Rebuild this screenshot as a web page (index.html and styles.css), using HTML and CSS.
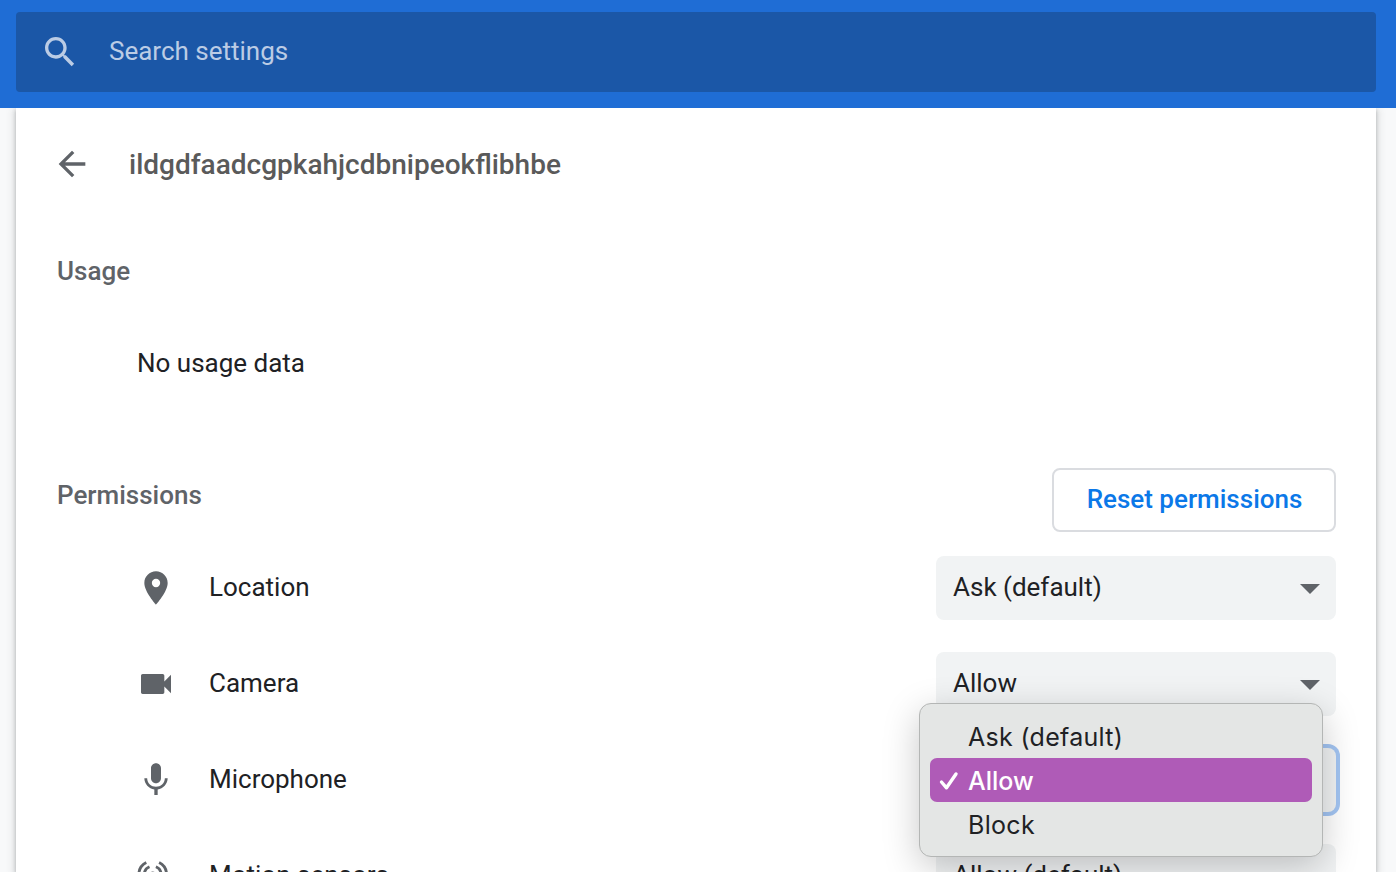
FILE: index.html
```html
<!DOCTYPE html>
<html lang="en">
<head>
    <meta charset="UTF-8">
    <meta name="viewport" content="width=device-width, initial-scale=1.0">
    <title>Settings</title>
    <link rel="stylesheet" href="styles.css">
</head>
<body>
    <!-- Toolbar -->
    <div id="toolbar">
        <div id="search">
            <svg class="icon" viewBox="0 0 24 24"><path d="M15.5 14h-.79l-.28-.27C15.41 12.59 16 11.11 16 9.5 16 5.91 13.09 3 9.5 3S3 5.91 3 9.5 5.91 16 9.5 16c1.61 0 3.09-.59 4.23-1.57l.27.28v.79l5 4.99L20.49 19l-4.99-5zm-6 0C7.01 14 5 11.99 5 9.5S7.01 5 9.5 5 14 7.01 14 9.5 11.99 14 9.5 14z"/></svg>
            <span>Search settings</span>
        </div>
    </div>

    <div id="page">
        <div id="title">
            <svg class="icon" viewBox="0 0 24 24"><path d="M20 11H7.83l5.59-5.59L12 4l-8 8 8 8 1.41-1.41L7.83 13H20v-2z"/></svg>
            <h1>ildgdfaadcgpkahjcdbnipeokflibhbe</h1>
        </div>

        <h2 class="usage-heading">Usage</h2>
        <div class="usage">No usage data</div>

        <div class="permissions-header">
            <h2>Permissions</h2>
            <button id="reset">Reset permissions</button>
        </div>

        <!-- Permission list -->
        <div class="row">
            <svg class="icon" viewBox="0 0 24 24"><path d="M12 2C8.13 2 5 5.13 5 9c0 5.25 7 13 7 13s7-7.75 7-13c0-3.87-3.13-7-7-7zm0 9.5a2.5 2.5 0 0 1 0-5 2.5 2.5 0 0 1 0 5z"/></svg>
            <span class="label">Location</span>
            <div class="select">Ask (default)</div>
        </div>
        <div class="row">
            <svg class="icon" viewBox="0 0 24 24"><path d="M17 10.5V7c0-.55-.45-1-1-1H4c-.55 0-1 .45-1 1v10c0 .55.45 1 1 1h12c.55 0 1-.45 1-1v-3.5l4 4v-11l-4 4z"/></svg>
            <span class="label">Camera</span>
            <div class="select">Allow</div>
        </div>
        <div class="row">
            <svg class="icon" viewBox="0 0 24 24"><path d="M12 14c1.66 0 2.99-1.34 2.99-3L15 5c0-1.66-1.34-3-3-3S9 3.34 9 5v6c0 1.66 1.34 3 3 3zm5.3-3c0 3-2.54 5.1-5.3 5.1S6.7 14 6.7 11H5c0 3.41 2.72 6.23 6 6.72V21h2v-3.28c3.28-.48 6-3.3 6-6.72h-1.7z"/></svg>
            <span class="label">Microphone</span>
            <div class="select focused">
                <div id="menu">
                    <div class="option">Ask (default)</div>
                    <div class="option selected">
                        <svg class="check" viewBox="0 0 20 20"><path d="M2.500 11l5 5.800L17 3"/></svg>
                        Allow
                    </div>
                    <div class="option">Block</div>
                </div>
            </div>
        </div>
        <div class="row">
            <svg class="icon sensors" viewBox="0 0 40 40">
                <circle cx="16.700" cy="18.500" r="3"/>
                <path d="M13.500 10.800a8.300 8.300 0 0 0 0 15.400M19.900 10.800a8.300 8.300 0 0 1 0 15.400M10.300 6.500a13.400 13.400 0 0 0 0 24M23.100 6.500a13.400 13.400 0 0 1 0 24"/>
            </svg>
            <span class="label">Motion sensors</span>
            <div class="select">Allow (default)</div>
        </div>
    </div>
</body>
</html>
```
FILE: styles.css
```css
* {
    box-sizing: border-box;
}
body {
    margin: 0;
    height: 872px;
    overflow: hidden;
    background: #f8f9fa;
    font-family: Roboto, sans-serif;
    font-size: 26px;
    line-height: 40px;
    color: #202124;
}
h1, h2 {
    margin: 0;
    font-weight: 500;
}
.icon {
    width: 40px;
    height: 40px;
    flex: none;
    fill: #5f6368;
}

/* Toolbar */
#toolbar {
    position: relative;
    z-index: 1;
    height: 108px;
    padding: 12px 20px 16px 16px;
    background: #1f6dd5;
}
#search {
    display: flex;
    align-items: center;
    gap: 29px;
    height: 80px;
    padding-left: 24px;
    border-radius: 4px;
    background: #1b57a7;
    color: #bbcce5;
}
#search .icon {
    fill: #bbcce5;
}
#search span {
    margin-bottom: 2px;
}

/* Card */
#page {
    height: 764px;
    overflow: hidden;
    margin: 0 20px 0 16px;
    padding: 0 40px;
    background: white;
    box-shadow: 0 2px 4px rgba(60, 64, 67, .3), 0 2px 8px 2px rgba(60, 64, 67, .15);
}
#title {
    display: flex;
    align-items: center;
    gap: 37px;
    height: 112px;
    margin-left: -4px;
}
#title h1 {
    margin-top: 2px;
    font-size: 28px;
    color: #5a5a5a;
}
h2 {
    padding-left: 1px;
    font-size: 26px;
    color: #5f6368;
}
.usage-heading {
    margin-top: 31px;
}
.usage {
    margin: 52px 0 0 81px;
}
.permissions-header {
    display: flex;
    justify-content: space-between;
    margin-top: 85px;
    height: 64px;
}
.permissions-header h2 {
    margin-top: 7px;
}
#reset {
    width: 284px;
    height: 64px;
    padding: 0 0 2px 1px;
    border: 2px solid #dadce0;
    border-radius: 8px;
    background: white;
    color: #0b78e8;
    font: 500 26px Roboto, sans-serif;
}

/* Permission list */
.row {
    display: flex;
    align-items: center;
    height: 96px;
    padding-left: 80px;
}
.permissions-header + .row {
    margin-top: 8px;
}
.label {
    flex: 1;
    margin: 0 0 2px 33px;
}
.select {
    position: relative;
    width: 400px;
    height: 64px;
    padding: 11px 17px;
    border-radius: 8px;
    background: #f1f3f4;
}
.select::after {
    content: "";
    position: absolute;
    top: 28px;
    right: 16px;
    border: 10px solid transparent;
    border-top-color: #5f6368;
    border-bottom: 0;
}
.focused {
    z-index: 2;
    box-shadow: 0 0 0 4px #a3c5f3;
}
.focused::after {
    display: none;
}
.sensors {
    stroke: #5f6368;
    stroke-width: 2.8;
}
.sensors circle {
    stroke: none;
}
.sensors path {
    fill: none;
}

/* Dropdown menu */
#menu {
    position: absolute;
    top: -45px;
    left: -17px;
    width: 404px;
    height: 154px;
    padding: 10px;
    border: 1px solid #b4b6b5;
    border-radius: 12px;
    background: #e4e6e5;
    box-shadow: 0 10px 36px rgba(0, 0, 0, .22);
}
.option {
    position: relative;
    height: 44px;
    padding-left: 38px;
    border-radius: 7px;
    line-height: 46px;
    font-family: Inter, sans-serif;
    font-size: 25px;
    letter-spacing: .3px;
}
.selected {
    background: #af5bb7;
    color: white;
    font-weight: 500;
    letter-spacing: 0;
}
.check {
    position: absolute;
    top: 13px;
    left: 9px;
    width: 20px;
    height: 20px;
    fill: none;
    stroke: white;
    stroke-width: 3.4;
    stroke-linecap: round;
    stroke-linejoin: round;
}
```
